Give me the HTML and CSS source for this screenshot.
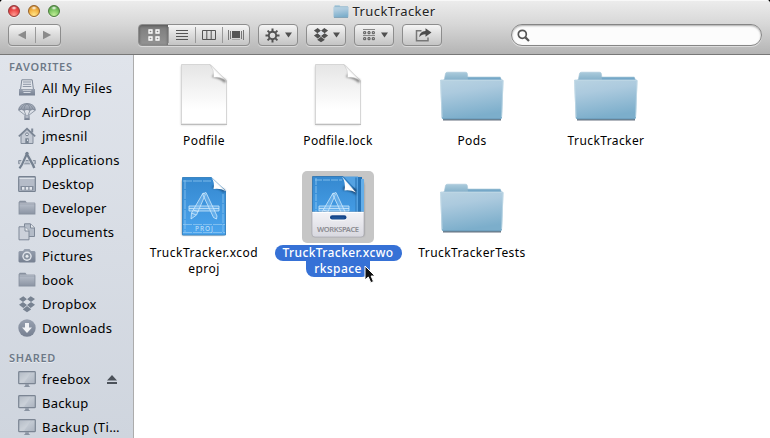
FILE: index.html
```html
<!DOCTYPE html>
<html lang="en">
<head>
<meta charset="utf-8">
<title>TruckTracker</title>
<link rel="stylesheet" href="styles.css">
</head>
<body>
<svg class="defs" width="0" height="0" aria-hidden="true">
  <defs>
    <linearGradient id="slate" x1="0" y1="0" x2="0" y2="1"><stop offset="0" stop-color="#98a1b0"/><stop offset="1" stop-color="#768091"/></linearGradient>
    <linearGradient id="slateLight" x1="0" y1="0" x2="0" y2="1"><stop offset="0" stop-color="#b4bbc7"/><stop offset="1" stop-color="#8d96a5"/></linearGradient>
    <linearGradient id="screen" x1="0" y1="0" x2="1" y2="1"><stop offset="0" stop-color="#a6afbb"/><stop offset=".5" stop-color="#c2c9d2"/><stop offset="1" stop-color="#aab2be"/></linearGradient>
    <linearGradient id="folderFront" x1="0" y1="0" x2=".25" y2="1"><stop offset="0" stop-color="#b9d3e2"/><stop offset=".35" stop-color="#accade"/><stop offset="1" stop-color="#7caecb"/></linearGradient>
    <linearGradient id="folderBack" x1="0" y1="0" x2="0" y2="1"><stop offset="0" stop-color="#abcbdc"/><stop offset="1" stop-color="#7eabc6"/></linearGradient>
    <linearGradient id="paper" x1="0" y1="0" x2="0" y2="1"><stop offset="0" stop-color="#e5e5e5"/><stop offset=".75" stop-color="#fff"/></linearGradient>
    <linearGradient id="curl" x1="0" y1="1" x2="1" y2="0"><stop offset="0" stop-color="#fff"/><stop offset=".4" stop-color="#fff"/><stop offset="1" stop-color="#c4c4c4"/></linearGradient>
    <linearGradient id="blueprint" x1="0" y1="0" x2="0" y2="1"><stop offset="0" stop-color="#3588cf"/><stop offset="1" stop-color="#4ba5ee"/></linearGradient>
    <linearGradient id="pocket" x1="0" y1="0" x2="0" y2="1"><stop offset="0" stop-color="#f3f3f7"/><stop offset="1" stop-color="#d8d8df"/></linearGradient>
    <filter id="soft" x="-20%" y="-20%" width="140%" height="150%"><feGaussianBlur stdDeviation="1.2"/></filter>
    <filter id="tight" x="-10%" y="-100%" width="120%" height="300%"><feGaussianBlur stdDeviation=".6"/></filter>

    <symbol id="i-dropbox" viewBox="0 0 18 18"><path d="M5.300 1.200 9 4.200 5 7 1 4zM12.700 1.200 9 4.200 13 7l4-3zM1 9.700 5 7l4 3-3.700 3zM17 9.700 13 7l-4 3 3.700 3zM5 14l.5-.3 3.500-2.800 3.500 2.800.5.3v.5l-4 2.700-4-2.700z"/><path d="m9 4.500 3.500 2.500L9 9.600 5.500 7z" fill="#dce0e7"/></symbol>

    <symbol id="i-mini-folder" viewBox="0 0 18 18"><path d="M.6 15.400V3.200L1.800 1.700h5.600l1.400 1.700h7.800l.8 1v11z" fill="#88919f"/><path d="M1.600 3.700h15v.8h-15z" fill="#cbd0da"/><path d="M1.500 5.300h15v9.300h-15z" fill="url(#slateLight)"/></symbol>

    <symbol id="i-display" viewBox="0 0 18 18"><rect x=".7" y="1.700" width="16.600" height="12" rx=".8" fill="url(#screen)" stroke="#7b8593" stroke-width="1.200"/><path d="M1.500 2.500H13L6 13H1.500z" fill="#fff" opacity=".14"/><path d="M7.200 14.200h3.600v1.600l1.500 1.100H5.700l1.500-1.100z" fill="#8993a1"/></symbol>

    <symbol id="i-document" viewBox="0 0 50 66">
      <path d="M2 4h30l15 16v43H2z" fill="#999" opacity=".5" filter="url(#soft)"/>
      <path d="M2.500 2.500H31L47.500 19v43h-45z" fill="url(#paper)" stroke="#d6d6d6"/>
      <path d="M33 15q8 1 13 6l1-3-12-6z" fill="#555" opacity=".8" filter="url(#soft)"/>
      <path d="M31 2.500Q35.500 8 34.500 15.500q8-1 13 3.500z" fill="url(#curl)" stroke="#c5c5c5" stroke-width=".5"/>
      <path d="M2 62.500h46" stroke="#bdbdbd"/>
    </symbol>

    <symbol id="i-folder" viewBox="0 0 66 54">
      <path d="M4 47.500h58v2H4z" fill="#3c4d5c" opacity=".8" filter="url(#tight)"/>
      <path d="M4 10.500 5.500 7.500l1-5q.4-1.300 2-1.300h18q1.500 0 1.800 1.300l.5 3.500h32.500L63 10.500z" fill="url(#folderBack)" stroke="#a6c6d8" stroke-width=".6"/>
      <path d="M28.800 6.500H61l1.500 2.500H29z" fill="#6ea3c5" opacity=".75"/>
      <path d="M1.800 8.700q-.8.1-.7 1.200l1.500 36.500q.1 1.800 1.700 1.800h57q1.600 0 1.700-1.800l1.500-36.500q.1-1.200-.7-1.200z" fill="url(#folderFront)"/>
      <path d="M1.800 9.300h62" stroke="#bfd8e5" stroke-width="1"/>
      <path d="M1.600 10l1.500 36M64.100 10l-1.500 36" fill="none" stroke="#cce0ea" stroke-width=".9" opacity=".7"/>
      <path d="M4 47.700h57.500" stroke="#6696b4" stroke-width=".8" opacity=".8"/>
    </symbol>

    <symbol id="i-tools" viewBox="0 0 32 30">
      <g fill="#8cc6f3" fill-opacity=".45" stroke="#d6edfd" stroke-width=".75" stroke-linejoin="round">
        <path d="M1 15h30v5H1zM1 17.500h30"/>
        <path d="m15 2 2.500 1.300L8.500 24l-5.500 4 .5-6z"/>
        <path d="m14.500 3 3.500-1.500L29 25l-.5 3-3-1.500z"/>
        <path d="m3.500 22 4.700 2M5.500 19.200l5 1.400" fill="none"/>
      </g>
    </symbol>
  </defs>
</svg>

<div class="window">
  <header class="toolbar">
    <div class="titlebar">
      <div class="lights"><i class="light red"></i><i class="light amber"></i><i class="light green"></i></div>
      <h1 class="title"><svg class="title-icon" viewBox="0 0 66 50" preserveAspectRatio="none"><use href="#i-folder" width="66" height="54"/></svg>TruckTracker</h1>
    </div>
    <div class="controls">
      <div class="group nav">
        <span class="seg"><svg width="10" height="10"><path d="M9 .8v8.400L.8 5z" fill="#8b8b8b"/></svg></span>
        <span class="seg"><svg width="10" height="10"><path d="M1 .8v8.400L9.200 5z" fill="#8b8b8b"/></svg></span>
      </div>
      <div class="group views">
        <span class="seg active"><svg width="12" height="12"><path d="M1 1h3v3H1zM8 1h3v3H8zM1 8h3v3H1zM8 8h3v3H8z" fill="none" stroke="#fff" stroke-width="1.300"/></svg></span>
        <span class="seg"><svg width="12" height="12"><path d="M0 1.500h12M0 4.500h12M0 7.500h12M0 10.500h12" stroke="#555"/></svg></span>
        <span class="seg"><svg width="14" height="12"><path d="M.5 1.500h13v9H.5zM4.800 1v10M9.200 1v10" fill="none" stroke="#555"/></svg></span>
        <span class="seg"><svg width="16" height="12"><path d="M.5 1v10M2.500 2v8M13.500 2v8M15.500 1v10" stroke="#777"/><path d="M4 2h8v7H4z" fill="#555"/><path d="M4 10.500h8" stroke="#aaa"/></svg></span>
      </div>
      <div class="group menu">
        <svg width="15" height="15" viewBox="-7.500 -7.500 15 15"><g stroke="#515151" fill="none"><circle r="3.700" stroke-width="1.900"/><path stroke-width="2" d="M0-4v-3M0 4v3M-4 0h-3M4 0h3M-2.900-2.900l-2-2M2.900-2.900l2-2M-2.900 2.900l-2 2M2.900 2.900l2 2"/></g></svg>
        <svg class="caret" width="7" height="6"><path d="M0 .5h7l-3.500 5z" fill="#505050"/></svg>
      </div>
      <div class="group menu">
        <svg width="16" height="16" fill="#505050"><use href="#i-dropbox"/></svg>
        <svg class="caret" width="7" height="6"><path d="M0 .5h7l-3.500 5z" fill="#505050"/></svg>
      </div>
      <div class="group menu arrange">
        <svg width="12" height="12"><path d="M0 .5h12M0 6.500h12" stroke="#888"/><path d="M.7 2.700h2v2h-2zM5 2.700h2v2H5zM9.300 2.700h2v2h-2zM.7 8.700h2v2h-2zM5 8.700h2v2H5zM9.300 8.700h2v2h-2z" fill="none" stroke="#555"/></svg>
        <svg class="caret" width="7" height="6"><path d="M0 .5h7l-3.500 5z" fill="#505050"/></svg>
      </div>
      <div class="group share">
        <svg width="17" height="14"><path d="M6.500 2.800h-5v10h11.500V9.500" fill="none" stroke="#777" stroke-width="1.500"/><path d="M10.500.3 16.500 4.500l-6 4.300V6.300Q6.500 6.200 4.200 9.300 4.600 3.200 10.500 3z" fill="#4b4b4b"/></svg>
      </div>
      <div class="search"><svg width="13" height="13"><circle cx="5.300" cy="5.300" r="4" fill="none" stroke="#555" stroke-width="1.700"/><path d="m8.400 8.400 3.600 3.600" stroke="#555" stroke-width="2.200"/></svg></div>
    </div>
  </header>

  <div class="body">
    <nav class="sidebar">
      <h2 class="heading">FAVORITES</h2>
      <ul class="places">
        <li><svg class="icon" viewBox="0 0 18 18"><path d="M3.800.8h10.400l1.300 10h-13z" fill="#e0e4ea" stroke="#7f8998"/><path d="M5 3h8M5 5.300h8M4.700 7.500h8.600" stroke="#8e97a5"/><path d="M1 10h3l1 2h8l1-2h3v6.500H1z" fill="url(#slate)"/><path d="M5.500 13.500h7" stroke="#d7dce4"/></svg>All My Files</li>
        <li><svg class="icon" viewBox="0 0 18 18"><path d="M.7 7.300C.8 3 4.300.6 9 .6s8.200 2.400 8.300 6.700l-2.600-1-2.800 1L9 6.300l-2.900 1-2.800-1z" fill="url(#slateLight)" stroke="#737e8e" stroke-width=".8"/><path d="M6 7Q6 2.500 9 .7q3 1.800 3 6.300M3.300 6Q4 2 9 .7 14 2 14.700 6M1 7.500l6.500 5M17 7.500l-6.500 5M6 7.300l2 5.200M12 7.300l-2 5.200" fill="none" stroke="#808a98" stroke-width=".8"/><path d="M6.300 12.300h5.400v4.800H6.300z" fill="url(#slate)"/><path d="M7.500 14h3" stroke="#d8dce4"/></svg>AirDrop</li>
        <li><svg class="icon" viewBox="0 0 18 18"><path d="M13.200 1.500h2v4h-2z" fill="#7e8897"/><path d="M3 8.300 9 2.500l6 5.800v8.200H3z" fill="#c4cad4" stroke="#808a99"/><path d="M.8 9.300 9 1.500l8.200 7.800" fill="none" stroke="#788392" stroke-width="1.600"/><circle cx="9" cy="7.300" r="1.400" fill="#eceff4" stroke="#788392"/><path d="M7.300 11.300h3.400v5.200H7.300z" fill="#788392"/><path d="M9 12.500h1v1.500H9z" fill="#dde2e8"/></svg>jmesnil</li>
        <li><svg class="icon" viewBox="0 0 18 18"><path d="M.7 9.500h16.600v3.300H.7z" fill="#b9c0cb" stroke="#858f9d"/><path d="M9 1.500 2.300 16.800" stroke="#d7dce3" stroke-width="4"/><path d="m9.300 1.800 6.400 14.500" stroke="#d7dce3" stroke-width="4"/><path d="M9.500 1.500 4 13.500l-2.500 3.800" stroke="#748090" stroke-width="2.100" fill="none"/><path d="m8.300 2 6.700 12 1.300 3" stroke="#748090" stroke-width="2.400" fill="none"/><circle cx="9" cy="2.200" r="1.500" fill="#748090"/></svg>Applications</li>
        <li><svg class="icon" viewBox="0 0 18 18"><rect x=".7" y="1.700" width="16.600" height="14.800" rx=".7" fill="#b5bcc8" stroke="#778291" stroke-width="1.200"/><path d="M1.500 3.500h15" stroke="#dce1e8"/><path d="M2.500 11h13v4.500h-13z" fill="#828c9b"/><path d="M4 12h2.500v2.800H4zM7.800 12h2.500v2.800H7.800zM11.500 12H14v2.800h-2.500z" fill="#e2e6ec"/></svg>Desktop</li>
        <li><svg class="icon" viewBox="0 0 18 18"><use href="#i-mini-folder"/></svg>Developer</li>
        <li><svg class="icon" viewBox="0 0 18 18"><path d="M6.500.8h6l4 4v8.700h-10z" fill="#b4bcc8" stroke="#7e8897"/><path d="M12.500 1v4h4" fill="#e4e8ed" stroke="#7e8897"/><path d="M1 3.800h6l4 4v9H1z" fill="#ccd1da" stroke="#7e8897"/><path d="M7 4v4h4" fill="#edf0f3" stroke="#7e8897"/></svg>Documents</li>
        <li><svg class="icon" viewBox="0 0 18 18"><path d="M1.500 4H5l1.500-2h5L13 4h3.500l1 1v9.500l-1 1h-15l-1-1V5z" fill="url(#slate)"/><circle cx="9" cy="9.300" r="4.700" fill="#e0e4eb"/><circle cx="9" cy="9.300" r="3.300" fill="#8993a1"/><circle cx="9" cy="9.300" r="1.500" fill="#e8ebf0"/></svg>Pictures</li>
        <li><svg class="icon" viewBox="0 0 18 18"><use href="#i-mini-folder"/></svg>book</li>
        <li><svg class="icon" viewBox="0 0 18 18" fill="#778291"><use href="#i-dropbox"/></svg>Dropbox</li>
        <li><svg class="icon" viewBox="0 0 18 18"><circle cx="9" cy="9" r="8.700" fill="url(#slate)"/><path d="M7 4h4v4.500h3L9 14 4 8.500h3z" fill="#f1f3f6"/></svg>Downloads</li>
      </ul>
      <h2 class="heading shared">SHARED</h2>
      <ul class="places">
        <li><svg class="icon" viewBox="0 0 18 18"><use href="#i-display"/></svg>freebox<svg class="eject" width="10" height="9"><path d="M5 0l5 5.500H0zM0 7h10v2H0z" fill="#4c525a"/></svg></li>
        <li><svg class="icon" viewBox="0 0 18 18"><use href="#i-display"/></svg>Backup</li>
        <li class="clipped"><svg class="icon" viewBox="0 0 18 18"><use href="#i-display"/></svg>Backup (Ti…</li>
      </ul>
    </nav>

    <main class="files">
      <div class="file"><div class="thumb"><svg width="50" height="66"><use href="#i-document"/></svg></div><span class="name">Podfile</span></div>
      <div class="file"><div class="thumb"><svg width="50" height="66"><use href="#i-document"/></svg></div><span class="name">Podfile.lock</span></div>
      <div class="file"><div class="thumb"><svg class="folder" width="66" height="54"><use href="#i-folder"/></svg></div><span class="name">Pods</span></div>
      <div class="file"><div class="thumb"><svg class="folder" width="66" height="54"><use href="#i-folder"/></svg></div><span class="name">TruckTracker</span></div>
      <div class="file"><div class="thumb">
        <svg width="50" height="66" viewBox="0 0 50 66">
          <path d="M3 6h30l12 12v43H3z" fill="#555" opacity=".7" filter="url(#soft)"/>
          <path d="M3.500 3.500h29L46.500 17v44h-43z" fill="url(#blueprint)" stroke="#3c86c2"/>
          <path d="M6 6v52M44 20v38M4 50.500h42M4 58.500h42M4 7h28" fill="none" stroke="#8fc6f0" stroke-width=".8" stroke-dasharray="9 1"/>
          <path d="M33 14q8 0 12 5l1-3-11-5z" fill="#0f3d68" opacity=".8" filter="url(#soft)"/>
          <path d="M32.500 3.500q3.500 5 2 11.500 7-1 12 2z" fill="url(#curl)"/>
          <use href="#i-tools" x="9" y="17" width="32" height="30"/>
          <text class="stamp" x="25" y="57" text-anchor="middle" textLength="18">PROJ</text>
        </svg></div><span class="name wide">TruckTracker.xcod<br>eproj</span></div>
      <div class="file selected"><div class="thumb">
        <svg width="72" height="72" viewBox="0 0 72 72">
          <path d="M12 7h46l4 6v52H11z" fill="#555" opacity=".6" filter="url(#soft)"/>
          <path d="M17 6h43v50H17z" fill="#2674b8"/><path d="M59 8h3v48h-3z" fill="#64aee9"/>
          <path d="M14 5.500h42v50H14z" fill="#54a2e2"/><path d="M10.500 5.500H41L54 19v38H10.500z" fill="url(#blueprint)" stroke="#256ba8" stroke-width=".7"/>
          <path d="M13 9h27M14 7v34" fill="none" stroke="#96cbf4" stroke-width=".8" stroke-dasharray="7 1"/>
          <path d="M54 20V6.500" stroke="#226cac"/>
          <use href="#i-tools" x="16" y="20" width="32" height="30"/>
          <path d="M41 19q8 0 13 5v-6l-12-3z" fill="#0c3358" opacity=".8" filter="url(#soft)"/>
          <path d="M40 5.500q4 6 2.500 14 6-1 11.500 2z" fill="url(#curl)"/>
          <path d="M10 41h52v22q0 3-3 3H13q-3 0-3-3z" fill="url(#pocket)" stroke="#aaaab1" stroke-width=".7"/><path d="M10.500 41.500h51" stroke="#fff"/>
          <rect x="27.500" y="44.500" width="17" height="5" rx="2.500" fill="#fff"/><rect x="28" y="44.200" width="16.500" height="4.300" rx="2.100" fill="#17468a"/><path d="M30 47h12" stroke="#2c64a8" stroke-width=".8"/>
          <text class="workspace" x="36" y="60.500" text-anchor="middle" textLength="42">WORKSPACE</text>
        </svg></div><span class="name"><b class="pill top">TruckTracker.xcwo</b><b class="pill bottom">rkspace</b></span>
        <svg class="pointer" width="12" height="19" viewBox="0 0 12 19"><path d="M1 1v14l3.300-3 2.500 5.700 2.700-1.200L7.100 11H11z" fill="#111" stroke="#fff" stroke-width="1"/></svg></div>
      <div class="file"><div class="thumb"><svg class="folder" width="66" height="54"><use href="#i-folder"/></svg></div><span class="name">TruckTrackerTests</span></div>
    </main>
  </div>
</div>
</body>
</html>
```
FILE: styles.css
```css
* { box-sizing: border-box; }
body { margin: 0; background: #000; font-family: "Noto Sans", "Open Sans", sans-serif; color: #000; }
h1, h2, ul { margin: 0; padding: 0; font-weight: normal; list-style: none; }
svg { display: block; flex: none; }
.defs { position: absolute; }

.window { width: 770px; height: 438px; display: flex; flex-direction: column; overflow: hidden; border-radius: 4px 4px 0 0; background: #fff; }

.toolbar { height: 55px; flex: none; border-bottom: 1px solid #777; background: linear-gradient(#ededed, #d7d7d7 45%, #b4b4b4); box-shadow: inset 0 1px #f8f8f8; }
.titlebar { height: 24px; display: grid; grid-template-columns: 1fr auto 1fr; align-items: center; padding: 0 10px 0 8px; }
.lights { display: flex; gap: 8px; margin-top: -2px; }
.light { width: 12px; height: 12px; border-radius: 50%; border: 1px solid #666; box-shadow: 0 1px #fff8; }
.red { background: radial-gradient(ellipse 3px 2px at 5px 2px, #fff, #fff0), radial-gradient(circle at 5px 9px, #ff9d94, #ed4b49 50%, #b7262b); border-color: #94383a; }
.amber { background: radial-gradient(ellipse 3px 2px at 5px 2px, #fff, #fff0), radial-gradient(circle at 5px 9px, #ffe68a, #f4b545 50%, #bc741c); border-color: #986127; }
.green { background: radial-gradient(ellipse 3px 2px at 5px 2px, #fff, #fff0), radial-gradient(circle at 5px 9px, #c2ee98, #7fc763 50%, #42863a); border-color: #4b7b3c; }
.title { display: flex; align-items: center; gap: 4px; font-size: 13px; line-height: 20px; letter-spacing: .4px; color: #222; text-shadow: 0 1px #fff8; margin-top: -2px; }
.title-icon { width: 16px; height: 13px; }

.controls { height: 22px; display: flex; padding: 0 8px; gap: 8px; }
.group { height: 22px; display: flex; border: 1px solid #8d8d8d; border-radius: 4px; background: linear-gradient(#f5f5f5, #dedede 45%, #c4c4c4); box-shadow: 0 1px #ffffff70; overflow: hidden; }
.nav { width: 53px; margin-right: 69px; }
.views { width: 112px; }
.seg { flex: 1; display: flex; align-items: center; justify-content: center; }
.seg + .seg { background: linear-gradient(#999, #999) left center / 1px 16px no-repeat; }
.seg.active { flex: 0 0 29px; background: linear-gradient(#7c7c7c, #949494); box-shadow: inset 0 1px 3px #555; }
.menu, .share { width: 40px; align-items: center; justify-content: space-between; padding: 0 5px 0 6px; }
.arrange { padding-left: 8px; }
.share { justify-content: center; padding: 0 0 0 2px; }
.search { width: 251px; height: 22px; margin-left: 61px; border: 1px solid #858585; border-radius: 11px; background: #fcfcfc; box-shadow: inset 0 1px 2px #aaa, 0 1px #fff7; padding: 4px 5px; }

.body { flex: 1; display: flex; min-height: 0; }
.sidebar { width: 134px; flex: none; overflow: hidden; border-right: 1px solid #acacac; background: linear-gradient(#e0e4eb, #cfd5de); padding-top: 1px; }
.heading { height: 20px; padding-left: 9px; font-size: 11px; line-height: 21px; font-weight: 600; color: #6d7988; letter-spacing: .65px; text-shadow: 0 1px #fff8; }
.shared { margin-top: 7px; }
.places li { height: 24px; display: flex; align-items: center; padding-left: 18px; gap: 6px; font-size: 13px; letter-spacing: .25px; white-space: nowrap; }
.places .clipped { letter-spacing: .45px; }
.icon { width: 18px; height: 18px; }
.eject { margin-left: 11px; }

.files { flex: 1; display: grid; grid-template-columns: repeat(4, 134px); grid-auto-rows: 112px; align-content: start; padding: 4px 0 0 3px; }
.file { position: relative; display: flex; flex-direction: column; align-items: center; }
.thumb { width: 72px; height: 72px; display: flex; align-items: center; justify-content: center; border-radius: 5px; }
.folder { margin-top: 6px; }
.name { margin-top: 2px; text-align: center; font-size: 12px; line-height: 16px; letter-spacing: .4px; white-space: nowrap; }
.wide { letter-spacing: .5px; }
.selected .thumb { background: #c6c6c6; }
.selected .name { display: flex; flex-direction: column; align-items: center; color: #fff; }
.pill { display: block; height: 16px; font-weight: 500; background: #3671d6; }
.top { width: 127px; border-radius: 8px; }
.bottom { width: 64px; border-radius: 0 0 8px 8px; }
.pointer { position: absolute; left: 93px; top: 94px; }
.stamp { font: 500 6.500px "Noto Sans", sans-serif; fill: #b5dcf8; }
.workspace { font: 600 7.500px "Noto Sans", sans-serif; fill: #8b8b91; }
```
